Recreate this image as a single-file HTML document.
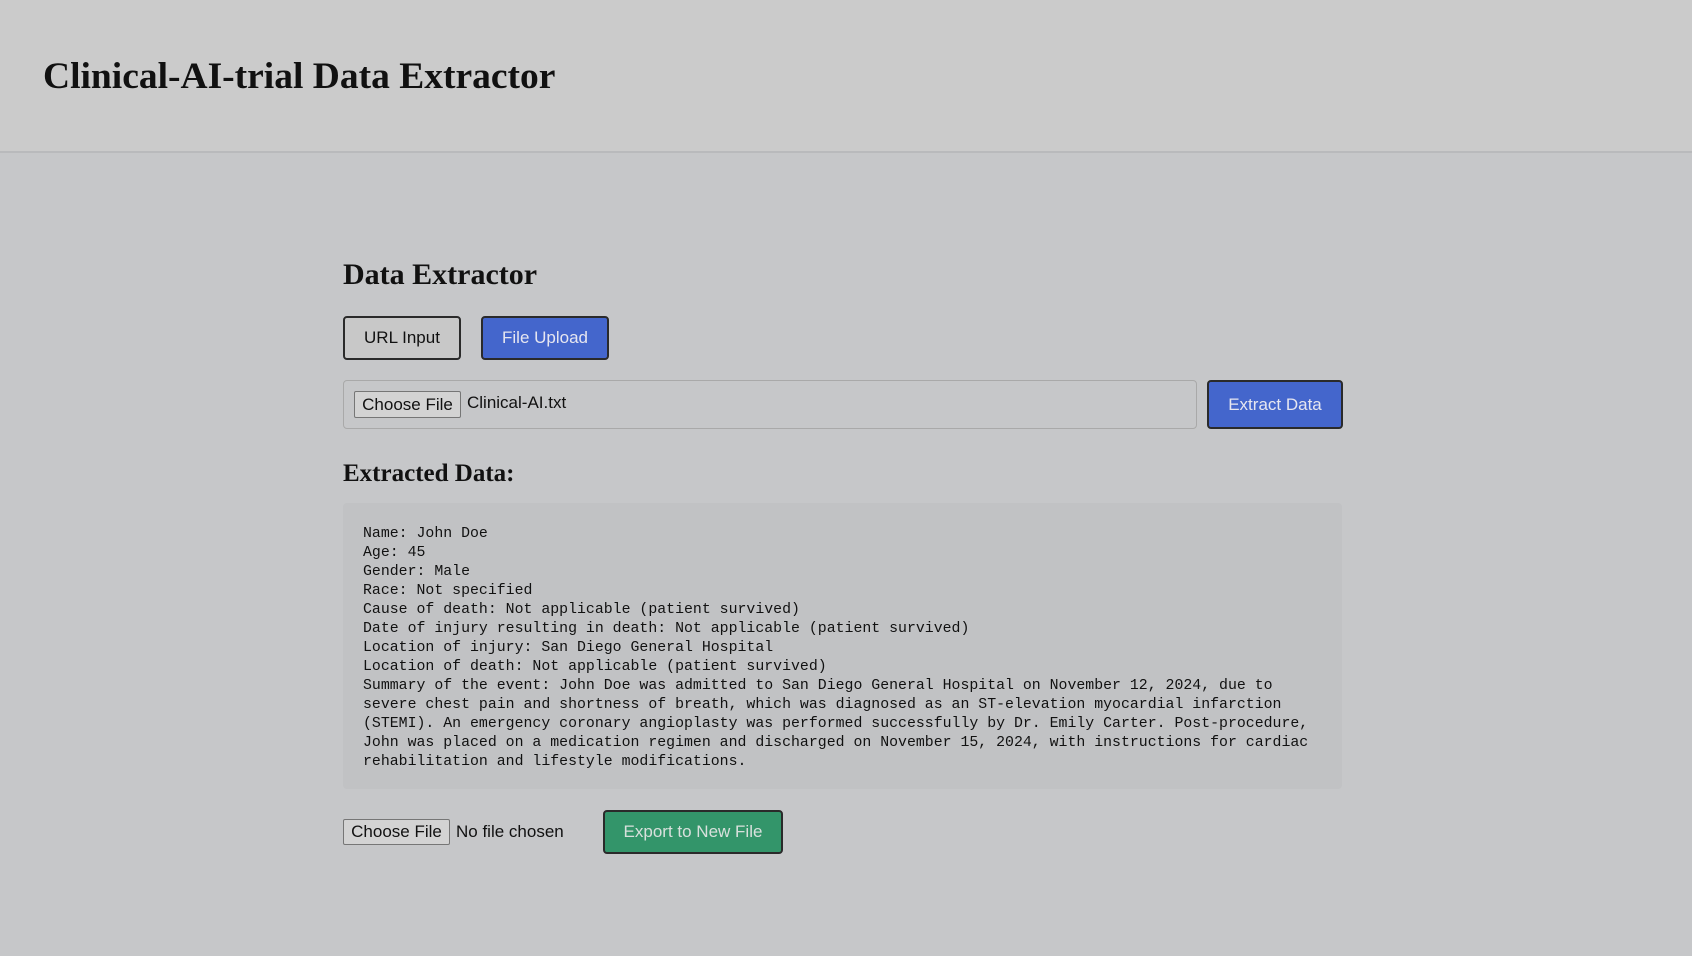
<!DOCTYPE html>
<html><head><meta charset="utf-8"><style>
*{box-sizing:border-box;margin:0;padding:0}
body{width:1692px;height:956px;background:#c6c7c9;font-family:"Liberation Sans",sans-serif;position:relative;overflow:hidden}
.hdr{position:absolute;left:0;top:0;width:1692px;height:153px;background:#cbcbcb;border-bottom:2px solid #b9babc}
h1{position:absolute;left:43px;top:55px;font:bold 37.5px "Liberation Serif",serif;color:#111}
h2{position:absolute;left:343px;font:bold 30px "Liberation Serif",serif;color:#111}
h3{position:absolute;left:343px;font:bold 25px "Liberation Serif",serif;color:#111}
.btn{position:absolute;border:2px solid #2a2a2a;border-radius:4px;font-size:17px;display:flex;align-items:center;justify-content:center}
.fb{position:absolute;border:1px solid #767676;border-radius:2px;background:#d3d3d3;font-size:17px;display:flex;align-items:center;justify-content:center;color:#111}
pre{position:absolute;left:343px;top:503px;width:999px;height:286px;background:#c1c2c4;border-radius:4px;padding:22px 20px;font:14.86px/19px "Liberation Mono",monospace;color:#111;white-space:pre}
</style></head><body>
<div class="hdr"><h1>Clinical-AI-trial Data Extractor</h1></div>
<h2 style="top:258px">Data Extractor</h2>
<div class="btn" style="left:343px;top:316px;width:118px;height:44px;background:#c8c8c8;color:#111">URL Input</div>
<div class="btn" style="left:481px;top:316px;width:128px;height:44px;background:#4466cc;color:#e6e6f0">File Upload</div>
<div style="position:absolute;left:343px;top:380px;width:854px;height:49px;border:1px solid #a9a9a9;border-radius:4px;background:#c6c7c9"></div>
<div class="fb" style="left:354px;top:391px;width:107px;height:27px">Choose File</div>
<div style="position:absolute;left:467px;top:393px;font-size:17px;color:#111">Clinical-AI.txt</div>
<div class="btn" style="left:1207px;top:380px;width:136px;height:49px;background:#4466cc;color:#e6e6f0">Extract Data</div>
<h3 style="top:460px">Extracted Data:</h3>
<pre>Name: John Doe
Age: 45
Gender: Male
Race: Not specified
Cause of death: Not applicable (patient survived)
Date of injury resulting in death: Not applicable (patient survived)
Location of injury: San Diego General Hospital
Location of death: Not applicable (patient survived)
Summary of the event: John Doe was admitted to San Diego General Hospital on November 12, 2024, due to
severe chest pain and shortness of breath, which was diagnosed as an ST-elevation myocardial infarction
(STEMI). An emergency coronary angioplasty was performed successfully by Dr. Emily Carter. Post-procedure,
John was placed on a medication regimen and discharged on November 15, 2024, with instructions for cardiac
rehabilitation and lifestyle modifications.</pre>
<div class="fb" style="left:343px;top:819px;width:107px;height:26px">Choose File</div>
<div style="position:absolute;left:456px;top:822px;font-size:17px;color:#111">No file chosen</div>
<div class="btn" style="left:603px;top:810px;width:180px;height:44px;background:#33956a;color:#d8e0dc">Export to New File</div>
</body></html>
